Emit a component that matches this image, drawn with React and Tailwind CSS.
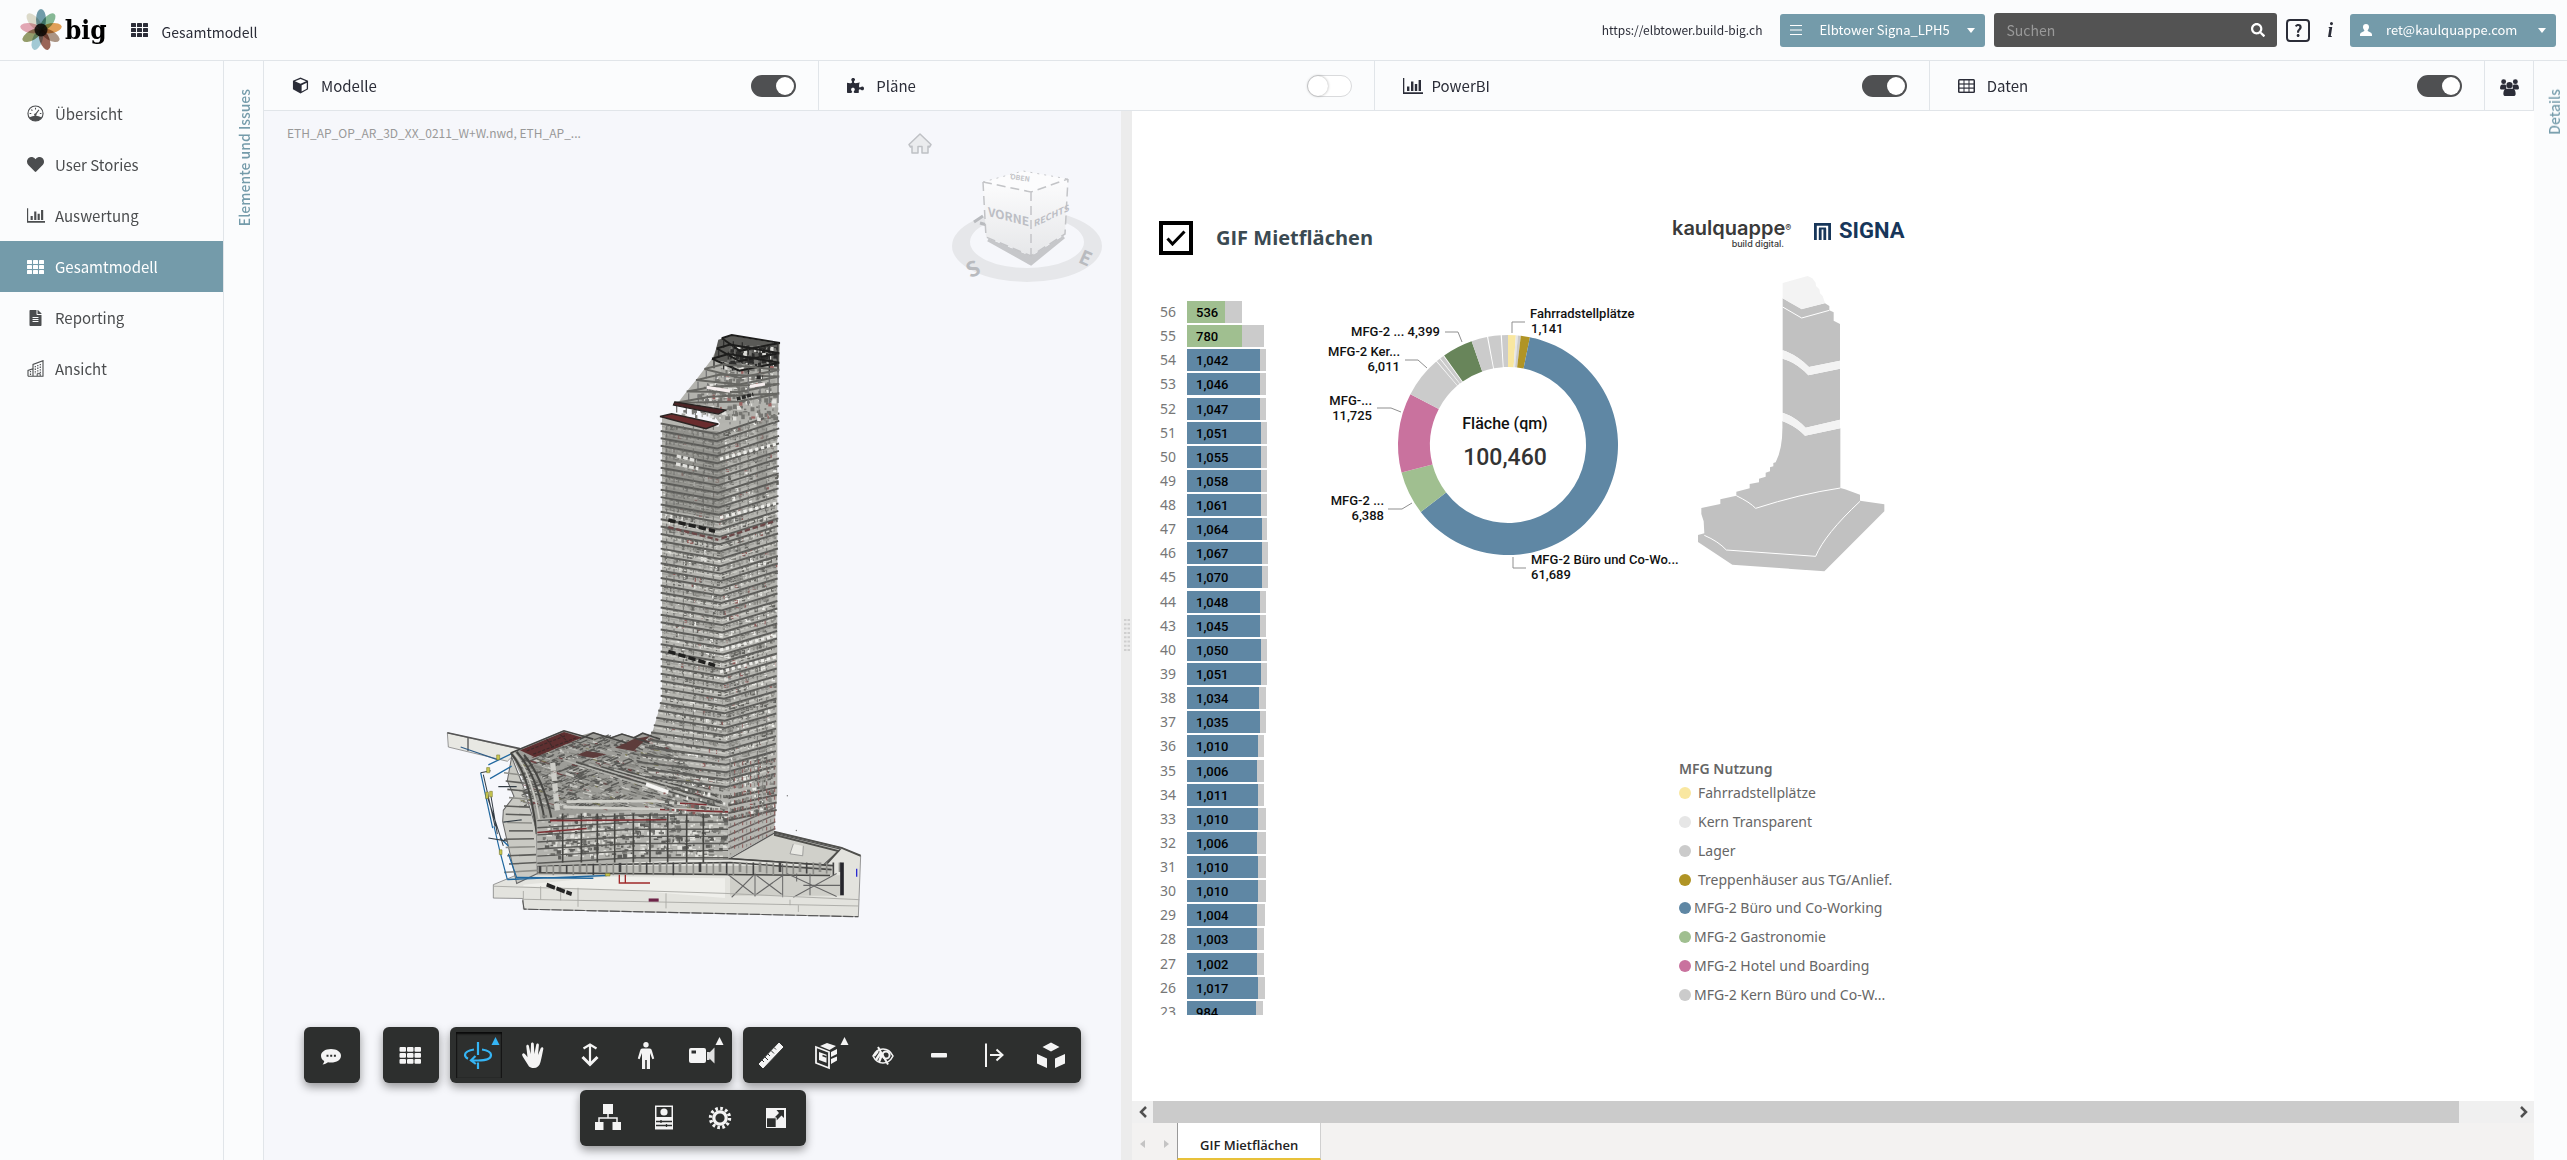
import React from "react";
import { FaHeart, FaFileAlt, FaSearch, FaPuzzlePiece } from "react-icons/fa";

/* ---------- small icons ---------- */

function GridIcon({ className }) {
  return (
    <svg viewBox="0 0 17 14" className={className} fill="currentColor" aria-hidden="true">
      {[0, 5, 10].map((y) =>
        [0, 6, 12].map((x) => <rect key={x + "-" + y} x={x} y={y} width="5" height="4" rx="0.6" />)
      )}
    </svg>
  );
}

function GaugeIcon({ className }) {
  return (
    <svg viewBox="0 0 18 18" className={className} aria-hidden="true">
      <circle cx="9" cy="9" r="8" fill="none" stroke="currentColor" strokeWidth="1.2" />
      <path d="M2.2 13.2Q9 9.6 15.8 13.2A8 8 0 0 1 2.2 13.2Z" fill="currentColor" />
      <path d="M8.6 10.5L12.6 5.2M9 3v1.8M4.6 4.8l1.1 1.2M2.8 9h1.7M13.6 9h1.6" stroke="currentColor" strokeWidth="1.1" fill="none" />
      <circle cx="8.8" cy="10.3" r="1.3" fill="currentColor" />
    </svg>
  );
}

function ChartIcon({ className }) {
  return (
    <svg viewBox="0 0 20 16" className={className} fill="currentColor" aria-hidden="true">
      <path d="M0 0h1.3v14.2H20V16H0z" />
      <path d="M4 8.5h2.4V13H4zM8 3.5h2.4V13H8zM11.8 6h2.4v7h-2.4zM15.6 2H18v11h-2.4z" />
    </svg>
  );
}

function BuildingIcon({ className }) {
  return (
    <svg viewBox="0 0 17 17" className={className} fill="none" stroke="currentColor" aria-hidden="true">
      <path d="M1 16.3V10.5l5-1.8v7.600M6 16V4.500l10-3.800v15.600M1 16.300h15.500" strokeWidth="1.1" />
      <path d="M8.300 6v8M10.800 5v8M13.300 4v9.500M3.500 11v4" strokeWidth="1.200" strokeDasharray="1.300 1.300" />
      <path d="M10.200 16v-2.300h3V16" strokeWidth="1" />
    </svg>
  );
}

function CubeIcon({ className }) {
  return (
    <svg viewBox="0 0 18 18" className={className} aria-hidden="true">
      <path d="M9 .5l8 3.600v9L9 17.500 1 13.100v-9z" fill="currentColor" />
      <path d="M9 2.100l5.900 2.500L9 7.200 3.100 4.600z" fill="#fff" />
      <path d="M10.200 8.700l5.400-2.500v6.200l-5.400 3z" fill="#fff" />
    </svg>
  );
}

function TableIcon({ className }) {
  return (
    <svg viewBox="0 0 17 14" className={className} aria-hidden="true">
      <rect width="17" height="14" rx="1.500" fill="currentColor" />
      {[1.500, 5.600, 9.700].map((y) =>
        [1.500, 6.500, 11.500].map((x) => <rect key={x + "-" + y} x={x} y={y} width="4" height="2.900" fill="#fff" />)
      )}
    </svg>
  );
}

function GroupIcon({ className }) {
  return (
    <svg viewBox="0 0 20 18" className={className} fill="currentColor" aria-hidden="true">
      <circle cx="3.800" cy="2.800" r="2.600" />
      <circle cx="16.200" cy="2.800" r="2.600" />
      <path d="M2.500 5.800h3l1.200 1.500-.2 3-.9.900H1.500C.5 11.200 0 10.600 0 9.600 0 7.500.8 5.800 2.500 5.800zM17.500 5.800h-3l-1.200 1.500.2 3 .9.900h4.100c1 0 1.500-.6 1.500-1.600 0-2.100-.8-3.800-2.500-3.800z" />
      <circle cx="10" cy="6.500" r="3.300" />
      <path d="M6.800 10.200h6.400c2.200 0 3.300 2.200 3.300 5.300 0 1.600-.8 2.500-2.300 2.500H5.800c-1.500 0-2.300-.9-2.300-2.500 0-3.100 1.100-5.300 3.300-5.300z" />
    </svg>
  );
}

function PersonIcon({ className }) {
  return (
    <svg viewBox="0 0 12 12" className={className} fill="currentColor" aria-hidden="true">
      <path d="M6 0c1.900 0 3 1.300 3 3 0 1.400-.6 2.500-1.300 3.200v.9L10.500 8.400c.9.400 1.500 1.200 1.500 2.300V12H0v-1.300c0-1.100.6-1.900 1.500-2.300l2.800-1.300v-.9C3.600 5.500 3 4.400 3 3c0-1.700 1.100-3 3-3z" />
    </svg>
  );
}

function Caret() {
  return (
    <svg viewBox="0 0 8 5" className="h-[5px] w-2 shrink-0" fill="#fff" aria-hidden="true">
      <path d="M0 0h8L4 5z" />
    </svg>
  );
}

function Flower() {
  const petals = [
    ["#4f8496", 0], ["#6aa97c", 40], ["#dd8a2e", 80], ["#9a7d67", 120], ["#84402f", 160],
    ["#8fc0cc", 200], ["#7c8646", 240], ["#e093a4", 280], ["#d9d5c0", 320],
  ];
  return (
    <svg viewBox="0 0 42 42" className="size-[42px]" aria-hidden="true">
      {petals.map(([c, a]) => (
        <ellipse key={a} cx="21" cy="10.500" rx="5" ry="10.500" fill={c} opacity="0.8"
          transform={`rotate(${a} 21 21)`} className="mix-blend-multiply" />
      ))}
      <circle cx="21" cy="21" r="6.500" fill="#0b0703" opacity="0.85" />
    </svg>
  );
}

/* ---------- header ---------- */

function Header() {
  return (
    <header className="flex h-[61px] shrink-0 items-center border-b border-[#e1e5e9] bg-[#fbfcfd] pr-[11px] pl-5">
      <a href="#" className="flex items-center text-black" aria-label="big">
        <Flower />
        <span className="ml-[3px] font-['DejaVu_Serif_Condensed','DejaVu_Serif',serif] text-[26px] leading-8 font-bold">big</span>
      </a>
      <GridIcon className="ml-6 h-[14px] w-[17px]" />
      <h1 className="ml-3.5 pt-1 text-[14px] leading-6">Gesamtmodell</h1>
      <div className="ml-auto flex items-center">
        <a href="#" className="mr-[18px] text-[12px] leading-6">https://elbtower.build-big.ch</a>
        <label className="mr-[9px] flex h-[33px] w-[205px] items-center rounded-[3px] bg-[#749baa] px-[10px] text-white">
          <svg viewBox="0 0 12 10" className="h-[10px] w-3 shrink-0" stroke="#fff" aria-hidden="true">
            <path d="M0 .5h12M0 5h12M0 9.500h12" />
          </svg>
          <select aria-label="Projekt" className="ml-[17px] min-w-0 flex-1 appearance-none bg-transparent text-[13px] leading-6 outline-none">
            <option>Elbtower Signa_LPH5</option>
          </select>
          <Caret />
        </label>
        <form className="mr-[9px] flex h-[34px] w-[283px] items-center rounded-[3px] bg-[#535353] px-3">
          <input aria-label="Suchen" placeholder="Suchen" className="min-w-0 flex-1 bg-transparent text-[14px] leading-6 text-white outline-none placeholder:text-[#999]" />
          <button type="button" aria-label="Suche starten" className="text-white">
            <FaSearch className="size-[14px]" />
          </button>
        </form>
        <button type="button" className="mr-[17px] flex h-[23px] w-6 items-center justify-center rounded-[4px] border-2 border-[#2b2d38] text-base leading-5 font-bold">?</button>
        <button type="button" className="mr-[17px] font-['Liberation_Serif',serif] text-xl leading-6 font-bold italic">i</button>
        <button type="button" aria-haspopup="menu" className="flex h-[33px] w-[206px] items-center rounded-[3px] bg-[#749baa] px-[10px] text-white">
          <PersonIcon className="size-3" />
          <span className="mr-auto ml-3.5 text-[13px] leading-6">ret@kaulquappe.com</span>
          <Caret />
        </button>
      </div>
    </header>
  );
}

/* ---------- sidebar ---------- */

const NAV = [
  ["Übersicht", GaugeIcon, "size-[17px]"],
  ["User Stories", FaHeart, "size-[17px]"],
  ["Auswertung", ChartIcon, "h-[15px] w-[18px]"],
  ["Gesamtmodell", GridIcon, "h-[14px] w-[17px]"],
  ["Reporting", FaFileAlt, "h-4 w-[17px]"],
  ["Ansicht", BuildingIcon, "size-[17px]"],
];

function Sidebar() {
  return (
    <nav className="w-56 shrink-0 border-r border-[#e1e5e9] bg-[#fbfcfd] pt-[27px] text-[#4b4d4f]">
      {NAV.map(([label, Icon, size]) => (
        <a key={label} href="#"
          className={"flex h-[51px] items-center pl-[27px] text-[15px] leading-6 " + (label === "Gesamtmodell" ? "bg-[#749baa] text-white" : "")}>
          <span className="flex w-7"><Icon className={size} /></span>
          {label}
        </a>
      ))}
    </nav>
  );
}

/* ---------- tab bar ---------- */

const PANELS = [
  ["Modelle", CubeIcon, "size-[17px]", true],
  ["Pläne", FaPuzzlePiece, "size-[17px]", false],
  ["PowerBI", ChartIcon, "h-4 w-5", true],
  ["Daten", TableIcon, "h-[14px] w-[17px]", true],
];

function PanelBar() {
  return (
    <div className="flex h-[50px] shrink-0 border-b border-[#e1e5e9] bg-[#fbfcfd]">
      {PANELS.map(([label, Icon, size, on]) => (
        <label key={label} className="flex flex-1 items-center border-r border-[#e1e5e9] pr-[22px] pl-7 text-[15px] leading-6">
          <span className="flex w-[29px]"><Icon className={size} /></span>
          {label}
          <input type="checkbox" role="switch" defaultChecked={on}
            className="ml-auto h-[22px] w-[45px] appearance-none rounded-full border border-[#d9dadc] bg-white before:block before:size-5 before:rounded-full before:bg-white before:shadow-[0_0_3px_rgba(0,0,0,0.35)] checked:border-2 checked:border-[#4f5052] checked:bg-[#4f5052] checked:before:ml-[23px] checked:before:size-[18px] checked:before:shadow-none" />
        </label>
      ))}
      <button type="button" aria-label="Benutzer" className="flex w-[49px] items-center justify-center border-r border-[#e1e5e9] pt-1">
        <GroupIcon className="h-[17px] w-[19px]" />
      </button>
    </div>
  );
}

function SideTab({ label, className }) {
  return (
    <aside className={"shrink-0 bg-[#fbfcfd] pt-7 " + className}>
      <button type="button" className="rotate-180 text-[14px] leading-6 font-medium text-[#749baa] [writing-mode:vertical-rl]">{label}</button>
    </aside>
  );
}

/* ---------- 3D model ---------- */

function makeRandom(seed) {
  let s = seed;
  return () => {
    s = (s * 16807) % 2147483647;
    return s / 2147483647;
  };
}

function TowerModel() {
  const rnd = makeRandom(77);
  const floors = [];
  for (let i = 0; i < 53; i++) {
    const t = i / 52;
    const y = 262 + i * 18.600;
    const flare = y > 950 ? Math.pow((y - 950) / 280, 1.500) * 150 : 0;
    floors.push({ y, left: 722 - flare * (y < 1120 ? 1 : 0.500), cx: 890 + t * 32, cy: y + 26, ry: y - 26 + t * 20, right: 1078 - t * 12 });
  }
  const specks = [];
  for (let i = 0; i < 2600; i++) {
    const f = floors[Math.floor(rnd() * floors.length)];
    const leftSide = rnd() < 0.450;
    const u = rnd();
    const x = leftSide ? 730 + u * (f.cx - 735) : f.cx + u * (f.right - f.cx - 8);
    const y = leftSide ? f.y + u * 26 : f.cy + u * (f.ry - f.cy);
    const k = rnd();
    const fill = k < 0.420 ? "#63635f" : k < 0.560 ? "#eeeeea" : k < 0.940 ? "#8b8b86" : "#8d5c5a";
    specks.push(<rect key={i} x={x} y={y + 3} width={2 + rnd() * 9} height={3 + rnd() * 8} fill={fill} />);
  }
  const crown = [];
  for (let i = 0; i < 520; i++) {
    const y = 62 + rnd() * 185;
    const start = 928 - Math.max(0, y - 95) * 1.050;
    const x = Math.max(start, 775) + rnd() * (1062 - Math.max(start, 775));
    const k = rnd();
    const dark = y < 112;
    const fill = dark ? (k < 0.650 ? "#2c2c2b" : k < 0.850 ? "#777774" : "#dcdcd8") : k < 0.450 ? "#757571" : k < 0.750 ? "#a7a7a2" : k < 0.950 ? "#e2e2de" : "#9b6462";
    crown.push(<rect key={i} x={x} y={y} width={3 + rnd() * 12} height={3 + rnd() * 9} fill={fill} />);
  }
  const clutter = [];
  for (let i = 0; i < 1500; i++) {
    const x = 300 + rnd() * 620;
    const top = x < 430 ? 1100 - (x - 300) * 0.300 : 1058;
    const y = top + rnd() * (1235 - top);
    const len = 5 + rnd() * 24;
    const k = rnd();
    clutter.push(<path key={i} d={`M${x} ${y}l${len} ${len * (x < 620 && k < 0.400 ? -0.350 : 0.250)}`}
      stroke={k < 0.500 ? "#595956" : k < 0.780 ? "#878782" : k < 0.920 ? "#c9c9c4" : k < 0.970 ? "#6e3f40" : "#7e7c58"} strokeWidth={1.500 + rnd() * 3} />);
  }
  const facade = [];
  for (let i = 0; i < 620; i++) {
    facade.push(<rect key={i} x={365 + rnd() * 550} y={1245 + rnd() * 110} width={3 + rnd() * 14} height={3 + rnd() * 7}
      fill={["#e2e2dd", "#5c5c59", "#777773", "#c5c5c0"][Math.floor(rnd() * 4)]} />);
  }
  const cap = [
    [905, 46, 935, 38, 1080, 58], [890, 72, 930, 62, 1078, 84], [876, 98, 925, 86, 1078, 108], [853, 124, 910, 112, 1078, 126],
    [828, 152, 900, 138, 1078, 143], [800, 181, 885, 168, 1078, 162], [764, 210, 870, 194, 1078, 186],
  ];
  return (
    <svg viewBox="0 0 1380 1568" preserveAspectRatio="none" className="h-[620px] w-[460px]" fill="none" role="img" aria-label="3D-Modell Elbtower">
      {/* base slabs */}
      <path d="M220 1428L300 1400 345 1360H925L1062 1294 1265 1335 1322 1355 1315 1509 312 1490 308 1463 220 1462Z" fill="#e3e3de" stroke="#777" strokeWidth="2" />
      <path d="M930 1362L1062 1298 1262 1338 1210 1378Z" fill="#d0d0ca" stroke="#555" strokeWidth="3" />
      <path d="M1062 1294L1265 1335 1322 1355M1062 1302L1255 1343 1215 1380" stroke="#50504d" strokeWidth="5" />
      <path d="M1120 1325L1110 1350 1148 1355 1150 1330" fill="#e9e9e4" stroke="#888" strokeWidth="2" />
      <path d="M350 1380H1235V1404H350Z" fill="#bdbdb7" />
      <path d="M930 1404H1262V1456H930Z" fill="#cfcfc9" />
      <path d="M350 1368L925 1362 1240 1380M350 1380L930 1372 1235 1390M355 1398L1230 1405" stroke="#474745" strokeWidth="4" />
      {Array.from({ length: 46 }, (_, i) => (
        <path key={i} d={`M${360 + i * 20} 1372V${1396 + (i % 3) * 4}`} stroke={i % 4 ? "#8a8a86" : "#444"} strokeWidth={i % 3 ? 5 : 8} />
      ))}
      <path d="M310 1428L560 1408 915 1412V1462L600 1440 310 1432Z" fill="#efefeb" />
      <path d="M920 1400L1005 1455 1088 1405V1460M1005 1400V1458M1088 1375V1460M935 1460L1000 1405M1010 1405L1085 1452M1120 1460L1250 1400M1100 1400L1250 1458M1130 1400V1420M1170 1400V1455M1150 1430H1260" stroke="#666" strokeWidth="3" />
      <path d="M1266 1372V1455" stroke="#26262c" strokeWidth="11" />
      <path d="M1310 1388V1408" stroke="#2b2bd0" strokeWidth="4" />
      <path d="M220 1432L912 1450 1318 1466M310 1465L1315 1482M310 1444V1490M362 1432V1466M422 1434V1468M474 1436V1484M738 1450V1488M1110 1466V1480M1135 1480V1497" stroke="#a9a9a5" strokeWidth="2.500" />
      <path d="M308 1468L312 1490 1315 1509" stroke="#555" strokeWidth="3" strokeDasharray="30 5" />
      <path d="M380 1428L455 1452" stroke="#252525" strokeWidth="10" strokeDasharray="26 5" />
      <path d="M600 1424H690M598 1403V1426M616 1403V1426" stroke="#a02a2a" strokeWidth="4" />
      <path d="M686 1467H716" stroke="#6e2448" strokeWidth="8" />

      {/* bridge */}
      <path d="M82 1044L270 1080 300 1085 262 1116 85 1080Z" fill="#e8e8e3" stroke="#777" strokeWidth="2" />
      <path d="M82 1044L300 1084M144 1056V1090" stroke="#555" strokeWidth="4" />
      <path d="M122 1080L232 1112" stroke="#2d5b86" strokeWidth="3" />

      {/* west terraces */}
      <path d="M275 1105L262 1165 282 1205 250 1240 248 1268 262 1320 290 1425 352 1400 350 1290 310 1180Z" fill="#c9c9c3" stroke="#666" strokeWidth="3" />
      {Array.from({ length: 13 }, (_, i) => (
        <path key={i} d={`M${252 + (i % 4) * 5} ${1145 + i * 21}L${318 + i * 3} ${1152 + i * 20}`} stroke={i % 3 ? "#5c5c59" : "#8f8f8a"} strokeWidth="4" />
      ))}
      <path d="M272 1098L205 1125M182 1145L218 1285M262 1415L560 1405M240 1310L265 1330M210 1160L275 1128M222 1280L240 1345M240 1345L262 1415M265 1350L290 1410 520 1412" stroke="#1f679f" strokeWidth="3.500" />
      <path d="M182 1145L212 1140M190 1150L225 1280M205 1310L262 1318M200 1200L250 1330M235 1180H290M250 1270L305 1264M212 1200L232 1300" stroke="#333c44" strokeWidth="3" />
      <path d="M200 1132h9v13h-9zM197 1194h8v16h-8zM209 1192h8v14h-8zM230 1100h9v12h-9zM238 1340h8v12h-8zM556 1400h14v6h-14z" fill="#c9c84f" stroke="#77752d" strokeWidth="1.500" />

      {/* podium */}
      <path d="M272 1095L430 1038 478 1052 520 1042 570 1056 605 1046 640 1054 668 1044 690 1050 726 1000 925 1200V1362L350 1380 350 1298 318 1180Z" fill="#9d9d98" />
      {clutter}
      <path d="M300 1088L432 1042 486 1056 345 1106Z" fill="#5e2f30" />
      <path d="M320 1090L440 1050M340 1098L470 1056M380 1060L400 1082M420 1048L445 1068" stroke="#3e2a2a" strokeWidth="3" strokeDasharray="9 5" />
      <path d="M585 1082L640 1060 690 1052 640 1090ZM470 1100L500 1090 560 1098 520 1108Z" fill="#5d3c3b" />
      <path d="M272 1095L432 1039 520 1060M480 1060L520 1044 620 1070M570 1058L606 1047 690 1070M640 1058L668 1045 720 1060" stroke="#454543" strokeWidth="4" />
      <path d="M272 1095Q330 1150 350 1300M290 1092Q352 1150 375 1270M312 1100Q370 1160 395 1262" stroke="#464643" strokeWidth="6" />
      <path d="M282 1095Q340 1150 362 1285" stroke="#c9c9c3" strokeWidth="5" />
      <path d="M398 1120L412 1240" stroke="#cdcdc8" strokeWidth="16" strokeDasharray="20 6" />
      {Array.from({ length: 8 }, (_, i) => (
        <path key={i} d={`M${430 + i * 38} ${1112 + i * 6}L${900} ${1240 - i * 7}`} stroke={i % 2 ? "#51514e" : "#b3b3ae"} strokeWidth="4" />
      ))}
      <path d="M678 1174L745 1194" stroke="#f6f6f4" strokeWidth="10" />
      <path d="M440 1218L700 1216 900 1235M430 1232L900 1240" stroke="#cfcfc9" strokeWidth="7" />
      <path d="M350 1262L640 1240 925 1240V1362L350 1380Z" fill="#b3b3ae" />
      {facade}
      {[1252, 1270, 1288, 1306, 1324, 1342, 1360].map((y) => (
        <path key={y} d={`M352 ${y + 14}L640 ${y}L925 ${y}`} stroke="#5a5a57" strokeWidth="3.500" />
      ))}
      {[428, 484, 532, 584, 640, 690, 743, 800, 850].map((x) => (
        <path key={x} d={`M${x} 1248V1372`} stroke="#464643" strokeWidth="5" />
      ))}
      <path d="M352 1296L500 1286M390 1266L740 1264M720 1238L925 1244M780 1222L860 1226" stroke="#7d2f33" strokeWidth="4" />

      {/* tower body */}
      <path d="M726 248L895 270 920 225 935 60 1072 70V1195L1062 1294 925 1362V1235L700 1035 726 960Z" fill="#b5b5b0" />
      {specks}
      <path d="M735 270L895 282 915 290V490L870 500 735 480Z" fill="#7b7b77" opacity="0.600" />
      <path d="M1010 200H1038V440H1010Z" fill="#8a8a86" opacity="0.600" />
      {floors.filter((f) => f.y < 1170).map((f, i) => (
        <g key={i}>
          <path d={`M${f.left} ${f.y}L${f.cx} ${f.cy}L${f.right} ${f.ry}`} stroke="#5c5c59" strokeWidth="5" />
          <path d={`M${f.left + 4} ${f.y + 7}L${f.cx} ${f.cy + 8}L${f.right - 6} ${f.ry + 7}`} stroke={i > 11 && i % 2 ? "#cfcfc9" : "#a1a19c"} strokeWidth="3.500" strokeDasharray={i % 3 ? "22 4" : "10 6"} />
        </g>
      ))}
      {floors.filter((f) => f.y >= 1170).map((f, i) => (
        <path key={i} d={`M925 ${f.cy + 10}L${1070} ${f.ry + 16}`} stroke="#5c5956" strokeWidth="5" />
      ))}
      {[1295, 1313, 1331, 1348].map((y) => (
        <path key={y} d={`M925 ${y - 10}L1066 ${y - 62}`} stroke="#6a6462" strokeWidth="4" />
      ))}
      {Array.from({ length: 12 }, (_, i) => (
        <path key={i} d={`M${932 + i * 12} ${1120 - i}V${1352 - i * 5}`} stroke={i % 2 ? "#8a5a58" : "#8b8b86"} strokeWidth="3" strokeDasharray="9 10" />
      ))}
      {[740, 762, 790, 820, 850, 880, 930, 960, 985, 1012, 1040, 1062].map((x) => (
        <path key={x} d={`M${x} ${x > 900 ? 235 : 268}V${x > 900 ? 1180 : 1080}`} stroke="#6d6d69" strokeWidth="2.500" strokeDasharray="10 9" />
      ))}
      <path d="M900 352L1075 312M900 500L1075 462M900 835L1070 798M900 890L1070 852" stroke="#ecece8" strokeWidth="8" strokeDasharray="10 8" />
      <path d="M745 506L885 534M745 838L885 874" stroke="#20201f" strokeWidth="9" strokeDasharray="22 9" />
      <path d="M745 524L895 556M905 552L1060 510" stroke="#6b4747" strokeWidth="6" strokeDasharray="16 8" />
      <path d="M770 344L830 356M768 364L835 376" stroke="#e2e2de" strokeWidth="8" strokeDasharray="14 6" />

      {/* stepped crown */}
      <path d="M905 46L935 38 1080 58 1074 240 900 262 880 240 770 214 800 181 828 152 853 124 876 98 890 72Z" fill="#b3b3ae" />
      <path d="M895 50L935 40 1074 60V118L935 110 880 100Z" fill="#5a5a57" />
      {crown}
      {cap.map(([ax, ay, bx, by, cx, cy], i) => (
        <g key={i}>
          <path d={`M${ax} ${ay}L${bx} ${by}L${cx} ${cy}M${ax} ${ay}L${cx - 120} ${cy + 20}L${cx} ${cy}`} stroke={i < 3 ? "#1d1d1c" : "#666662"} strokeWidth="5" />
          <path d={`M${ax + 6} ${ay + 4}V${ay + 24}M${ax + 35} ${ay + 8}V${ay + 27}M${ax + 62} ${ay + 10}V${ay + 30}M985 ${cy + 12}V${cy + 30}M1020 ${cy + 8}V${cy + 26}M1048 ${cy + 6}V${cy + 26}M1074 ${cy}V${cy + 24}`} stroke={i < 3 ? "#30302f" : "#777"} strokeWidth="4" />
        </g>
      ))}
      <path d="M860 170L930 180M990 168L1035 162" stroke="#f5eeee" strokeWidth="8" />
      <path d="M950 200L1000 188M1010 145H1028" stroke="#2a2a29" strokeWidth="9" strokeDasharray="12 4" />
      <path d="M764 207L918 228 895 238 760 215Z" fill="#4b2426" stroke="#262221" strokeWidth="3" />
      <path d="M720 244L755 237 895 263 858 275Z" fill="#6a2c2e" stroke="#2c2423" strokeWidth="4" />
      <circle cx="1102" cy="1203" r="2" fill="#777" />
      <circle cx="1129" cy="1291" r="2" fill="#777" />
    </svg>
  );
}

function ViewCube() {
  return (
    <svg viewBox="0 0 152 122" className="h-[122px] w-[152px]" fill="none" role="img" aria-label="Ansichtswürfel">
      <defs>
        <linearGradient id="face" x1="0" y1="0" x2="0" y2="1">
          <stop offset="0" stopColor="#fcfcfd" />
          <stop offset="1" stopColor="#e6e7e9" />
        </linearGradient>
      </defs>
      <path fillRule="evenodd" fill="#e6e7ea" d="M0 82a75 36 0 1 0 150 0a75 36 0 1 0 -150 0ZM18 78a57 26 0 1 0 114 0a57 26 0 1 0 -114 0Z" />
      <text x="14" y="112" fontSize="21" fontWeight="700" fill="#b9bbbf" transform="rotate(-24 22 104)">S</text>
      <text x="128" y="102" fontSize="19" fontWeight="700" fill="#b9bbbf" transform="rotate(24 136 94)">E</text>
      <path d="M22 58l9-6M28 59l7 2" stroke="#b9bbbf" strokeWidth="3" />
      <path d="M36 76L79 94 112 73 79 100Z" fill="#c6c7ca" stroke="#c6c7ca" strokeWidth="3" />
      <path d="M31 18L79 28V92L34 73Z" fill="url(#face)" />
      <path d="M79 28L116 15 113 70 79 92Z" fill="url(#face)" />
      <path d="M31 18L71 7 116 15 79 28Z" fill="#fcfcfd" />
      <path d="M31 18L79 28 116 15M79 28V92M31 18L34 73 79 92 113 70 116 15" stroke="#c3c4c7" strokeWidth="1.500" strokeDasharray="9 5" />
      <path d="M31 18L71 7 116 15" stroke="#c8c9cc" strokeWidth="1" strokeDasharray="2 5" />
      <text x="0" y="0" fontSize="12" fontWeight="700" fill="#bcbec4" transform="translate(36 52) skewY(14)">VORNE</text>
      <text x="0" y="0" fontSize="9" fontWeight="700" fill="#bcbec4" transform="translate(82 63) skewY(-25)">RECHTS</text>
      <text x="58" y="15" fontSize="7" fontWeight="700" fill="#c3c4c8" transform="rotate(8 58 15)">OBEN</text>
    </svg>
  );
}

/* ---------- viewer toolbar ---------- */

const W = "#f4f4f4";
const TOOL_GROUPS = [
  [
    ["Kommentar", <path key="p" d="M14 8c5.800 0 10 2.800 10 6.800s-4.200 6.800-10 6.800c-1 0-2-.1-3-.3-1.500 1.300-3.500 2-5.500 2.200 1-1 1.600-2.200 1.700-3.500C5 18.700 4 16.900 4 14.800 4 10.800 8.200 8 14 8zM9.500 13.800v2h2v-2zm3.700 0v2h2v-2zm3.700 0v2h2v-2z" fill={W} fillRule="evenodd" />],
  ],
  [
    ["Kacheln", <g key="p" fill={W}>{[6, 12, 18].map((y) => [3.500, 11, 18.500].map((x) => <rect key={x + y * 30} x={x} y={y} width="6.500" height="4.800" rx="1" />))}</g>],
  ],
  [
    ["Orbit", <g key="p" stroke="#35b5f5" strokeWidth="2.200" fill="none"><path d="M14 1v13M14 21.500V28M10 8.500C4 9.500 1 11.500 1 14c0 1.600 1.200 2.800 3 3.700M18 8.500c5.500.9 9 2.700 9 5.500 0 4-6.500 5.500-13 5.500H7.500M11.500 15l-4.500 4.300 4.800 3.700" /></g>, "#35b5f5"],
    ["Verschieben", <path key="p" d="M9 25.500L3 16c-1-1.800-1.300-3.200 0-3.600 1.300-.3 2.500 1.200 4.500 3.900L6.300 5.500c-.2-2 2.200-2.300 2.600-.4l1.700 8L11 3c0-2 2.700-2 2.800 0l.6 10 1.800-9.300c.4-1.900 2.900-1.500 2.700.4l-.9 10 2.800-7c.7-1.700 2.900-1 2.500.8-1 5-1.800 9-2.800 13-1 4-3.500 6.100-6.700 6.100-2.400 0-3.800-.6-4.800-1.500z" fill={W} />],
    ["Zoom", <g key="p" stroke={W} strokeWidth="3" fill="none"><path d="M14 3v19M7.500 7.500L14 3.500l6.500 4" strokeWidth="2.200" /><path d="M6.500 16l7.500 7.500 7.500-7.500" /></g>],
    ["Erste Person", <g key="p" fill={W}><circle cx="14" cy="3.800" r="2.700" /><path d="M10.500 7.500h7c1.500 0 2 .8 2.500 2.500l2.200 7.500-1.800.8L18 12v16h-3.200v-9h-1.600v9H10V12l-2.400 6.300-1.800-.8L8 10c.5-1.700 1-2.500 2.500-2.500z" /></g>],
    ["Kamera", <g key="p" fill={W}><path d="M3 7h13a2 2 0 0 1 2 2v11a2 2 0 0 1-2 2H3a2 2 0 0 1-2-2V9a2 2 0 0 1 2-2zm.5 2.500v3h4.500v-3z" fillRule="evenodd" /><path d="M19 11h2.500v8H19zM21.500 11.500l5-5v16l-5-5z" opacity="0.9" /></g>, W],
  ],
  [
    ["Messen", <path key="p" d="M1 23L22 1l5 5L6 28zM5 19l2 2M8 16l3 3M11 13l2 2M14 9.500l3 3M17 6.500l2 2" fill={W} stroke="#2d2f2e" strokeWidth="1" />],
    ["Schnitt", <g key="p"><path d="M3 6l13 5v16L3 22z" fill="none" stroke={W} strokeWidth="1.800" /><path d="M6 11l7.500 2.800v8L6 19z" fill={W} /><path d="M9.500 14.500l4 1.500" stroke="#2d2f2e" strokeWidth="1.500" /><path d="M7 5l7-3 9 3-6.500 4zM18 11l6-3v5l-6 3zM18 18l6-2.500v4L18 23z" fill={W} /></g>, W],
    ["Ausblenden", <g key="p" stroke={W} fill="none"><path d="M4 15c2.500-5 6-7 10-7s7.500 2 10 7c-2.500 5-6 7-10 7S6.500 20 4 15z" strokeWidth="1.600" /><path d="M7 19l5-8M10 21l3.500-9M5 15l4-5" strokeWidth="2.400" /><circle cx="17" cy="14" r="3.600" strokeWidth="2" /><path d="M9 6l10 17.500" strokeWidth="2" /></g>],
    ["Ebene", <rect key="p" x="6" y="12" width="16" height="4.500" rx="1" fill={W} />],
    ["Teilen", <g key="p" stroke={W} strokeWidth="2" fill="none"><path d="M5 2.500v23.500M9 14h12M15.500 8.500l6 5.500-6 5.500" /></g>],
    ["Explodieren", <path key="p" d="M14 1.500l8.500 4.500-8.500 4.500L5.500 6zM0 13l10 4.500V27L0 22.500zM28 13l-10 4.500V27l10-4.500z" fill={W} />],
  ],
  [
    ["Modellbrowser", <g key="p" fill={W}><path d="M9 0h10v10H9zM1 18h8.500v8H1zM18.500 18H27v8h-8.500z" /><path d="M14 10v4M5 18v-4h18v4" stroke={W} strokeWidth="1.500" fill="none" /></g>],
    ["Eigenschaften", <g key="p"><path d="M5 1.500h18v24H5z" fill={W} /><path d="M6.500 3h15v10h-15z" fill="#2d2f2e" /><circle cx="14" cy="8" r="3.600" fill={W} /><path d="M6 17.500h16M6 21.500h16M11 16v3M16.500 20v3" stroke="#2d2f2e" strokeWidth="1.300" /></g>],
    ["Einstellungen", <g key="p"><circle cx="14" cy="14" r="6.200" fill="none" stroke={W} strokeWidth="3.200" /><circle cx="14" cy="14" r="9.500" fill="none" stroke={W} strokeWidth="3.400" strokeDasharray="2.600 2.370" /></g>],
    ["Vollbild", <g key="p"><path d="M4 4h20v20H4z" fill={W} /><path d="M5 14h9v9H5zM14.500 6H22v8l-2.500-2.500-5 5-2.500-2.500 5-5z" fill="#2d2f2e" /><path d="M5 13.800h9.200V23" stroke={W} fill="none" /></g>],
  ],
];

function ToolGroup({ tools, active }) {
  return (
    <div className={"flex rounded-md bg-[#2d2f2e] shadow-[0_4px_10px_rgba(0,0,0,0.4)] " + (tools.length > 1 ? "px-px" : "")}>
      {tools.map(([label, icon, flyout]) => (
        <button key={label} type="button" aria-label={label} className="flex size-14 items-center justify-center">
          <svg viewBox="0 0 46 46" className={"size-[46px] " + (label === active ? "shadow-[inset_0_2px_2px_#0a0a0a,inset_1px_0_1px_#1a1a1a,inset_-1px_0_1px_#1a1a1a]" : "")} aria-hidden="true">
            <g transform="translate(8 9)">{icon}</g>
            {flyout && <path d="M39.500 5l4 8h-8z" fill={flyout} />}
          </svg>
        </button>
      ))}
    </div>
  );
}

function ModelViewer() {
  return (
    <section className="flex min-w-0 flex-[857_1_0%] flex-col bg-[#f6f7fb]">
      <div className="flex items-start pt-[10px] pr-[17px] pl-[23px]">
        <p className="text-[12px] leading-6 text-[#999]">ETH_AP_OP_AR_3D_XX_0211_W+W.nwd, ETH_AP_...</p>
        <button type="button" aria-label="Startansicht" className="mt-3 mr-[20px] ml-auto">
          <svg viewBox="0 0 24 21" className="h-[21px] w-6" fill="#ebecee" stroke="#bfc1c5" strokeWidth="1.500" strokeLinejoin="round" aria-hidden="true">
            <path d="M12 1L1 11.500l1.500 2.500 1.500-.8V20h6v-6.500h4V20h6v-6.800l1.500.8L23 11.500z" />
          </svg>
        </button>
        <div className="mt-[43px]"><ViewCube /></div>
      </div>
      <div className="flex flex-1 justify-center pt-[34px] pr-[85px]"><TowerModel /></div>
      <div className="flex flex-col items-center gap-[7px] pb-[14px]">
        <div className="flex gap-[11px]">
          <div className="mr-3"><ToolGroup tools={TOOL_GROUPS[0]} /></div>
          <ToolGroup tools={TOOL_GROUPS[1]} />
          <ToolGroup tools={TOOL_GROUPS[2]} active="Orbit" />
          <ToolGroup tools={TOOL_GROUPS[3]} />
        </div>
        <ToolGroup tools={TOOL_GROUPS[4]} />
      </div>
    </section>
  );
}

/* ---------- report ---------- */

/* floor, label, total bar length */
const FLOORS = [
  [56, 536, 55], [55, 780, 77], [54, 1042, 79], [53, 1046, 79], [52, 1047, 79], [51, 1051, 80], [50, 1055, 80],
  [49, 1058, 80], [48, 1061, 80], [47, 1064, 80], [46, 1067, 81], [45, 1070, 81], [44, 1048, 79], [43, 1045, 79],
  [40, 1050, 80], [39, 1051, 80], [38, 1034, 79], [37, 1035, 79], [36, 1010, 77], [35, 1006, 77], [34, 1011, 77],
  [33, 1010, 79], [32, 1006, 79], [31, 1010, 79], [30, 1010, 79], [29, 1004, 78], [28, 1003, 77], [27, 1002, 77],
  [26, 1017, 78], [23, 984, 76],
];

function FloorBars() {
  return (
    <div className="h-[714px] shrink-0 overflow-hidden">
      <ul className="grid h-[724px] grid-rows-[repeat(30,minmax(0,1fr))]">
        {FLOORS.map(([floor, value, total]) => (
          <li key={floor} className="flex">
            <span className="w-[17px] text-right font-['Noto_Sans',sans-serif] text-[14px] leading-[22px] text-[#777]">{floor}</span>
            <div className="ml-[11px] h-[22px] bg-[#cbcbcb]" style={{ width: total }}>
              <div className={"h-full pl-[9px] font-['Roboto',sans-serif] text-[13px] leading-6 font-medium text-black " + (value < 800 ? "bg-[#a0bf90]" : "bg-[#5f87a4]")}
                style={{ width: Math.round(value / 14.270) }}>
                {value.toLocaleString("en-US")}
              </div>
            </div>
          </li>
        ))}
      </ul>
    </div>
  );
}

const SLICES = [
  [0, 4.100, "#f9e7a0"], [4.100, 5.200, "#e6e6e6"], [5.200, 6.700, "#cbcbcb"], [6.700, 11.500, "#b09425"],
  [11.500, 232.500, "#5f87a4"], [232.500, 255.500, "#a0bf90"], [255.500, 297.500, "#c9729e"], [297.500, 319.300, "#cbcbcb"],
  [319.700, 321.600, "#cbcbcb"], [322, 324, "#cbcbcb"], [324.500, 340.700, "#68855a"], [340.700, 349, "#cbcbcb"],
  [349.600, 356.200, "#cbcbcb"], [356.800, 360, "#cbcbcb"],
];

function arc(a, b) {
  const cx = 188, cy = 144, R = 110, r = 78;
  const p = (ang, rad) => {
    const t = ((ang - 90) * Math.PI) / 180;
    return `${(cx + rad * Math.cos(t)).toFixed(2)} ${(cy + rad * Math.sin(t)).toFixed(2)}`;
  };
  const big = b - a > 180 ? 1 : 0;
  return `M${p(a, R)}A${R} ${R} 0 ${big} 1 ${p(b, R)}L${p(b, r)}A${r} ${r} 0 ${big} 0 ${p(a, r)}Z`;
}

function Donut() {
  return (
    <svg viewBox="0 0 352 310" className="h-[310px] w-[352px] overflow-visible font-['Roboto',sans-serif] font-medium" fontSize="13" role="img" aria-label="Fläche nach MFG Nutzung">
      {SLICES.map(([a, b, c]) => <path key={a} d={arc(a, b)} fill={c} />)}
      <path d="M192 32V21h13M125 31h13l4 10M85 59h13l9 8M57 107h14l10 4M68 208h14l10-6M193 256v11h13" fill="none" stroke="#8f8f8f" />
      <g fill="#111">
        <text x="210" y="17">Fahrradstellplätze</text>
        <text x="211" y="32">1,141</text>
        <text x="120" y="35" textAnchor="end">MFG-2 ... 4,399</text>
        <text x="80" y="55" textAnchor="end">MFG-2 Ker...</text>
        <text x="80" y="70" textAnchor="end">6,011</text>
        <text x="52" y="104" textAnchor="end">MFG-...</text>
        <text x="52" y="119" textAnchor="end">11,725</text>
        <text x="64" y="204" textAnchor="end">MFG-2 ...</text>
        <text x="64" y="219" textAnchor="end">6,388</text>
        <text x="211" y="263">MFG-2 Büro und Co-Wo...</text>
        <text x="211" y="278">61,689</text>
        <text x="185" y="128" textAnchor="middle" fontSize="16">Fläche (qm)</text>
        <text x="185" y="164" textAnchor="middle" fontSize="23" fill="#333">100,460</text>
      </g>
    </svg>
  );
}

function Silhouette() {
  return (
    <svg viewBox="168 220 576 900" className="h-[300px] w-48" role="img" aria-label="Gebäudeansicht">
      <g fill="#c1c1c1">
        <path d="M428 293L485 325 555 308 568 316V329L581 335V360L600 370V480L507 499Q470 462 428 449Z" />
        <path d="M428 474Q470 486 505 524L600 504V657L497 681Q465 648 428 636Z" />
        <path d="M428 662Q465 675 495 705L601 683V862L615 866 660 882V900L733 911V932L553 1112 277 1092 174 1024V1003L193 998 191 962 184 940V922L241 910V896L289 885V873L329 863V850L357 845V834L377 828V816L390 812V800L400 797V787L407 785Q430 740 427 662Z" />
      </g>
      <g fill="#f3f3f3">
        <path d="M428 247L503 226 517 233 527 246 528 256 538 266 540 278 548 286 555 307 485 326 428 293Z" />
        <path d="M428 449Q470 462 507 499L600 480V504L505 524Q470 486 428 474Z" />
        <path d="M428 636Q465 648 497 681L600 657V683L495 705Q465 675 428 662Z" />
      </g>
      <path d="M428 319L485 352 568 329M289 885Q330 905 347 923Q480 880 601 862M193 1004Q235 1022 259 1048L527 1067Q555 1000 660 902" fill="none" stroke="#fff" strokeWidth="3" />
    </svg>
  );
}

const LEGEND = [
  ["Fahrradstellplätze", "bg-[#f9e7a0]", true],
  ["Kern Transparent", "bg-[#e6e6e6]", true],
  ["Lager", "bg-[#cbcbcb]", true],
  ["Treppenhäuser aus TG/Anlief.", "bg-[#b09425]", true],
  ["MFG-2 Büro und Co-Working", "bg-[#5f87a4]", false],
  ["MFG-2 Gastronomie", "bg-[#a0bf90]", false],
  ["MFG-2 Hotel und Boarding", "bg-[#c9729e]", false],
  ["MFG-2 Kern Büro und Co-W...", "bg-[#cbcbcb]", false],
];

function Report() {
  return (
    <section className="flex min-w-0 flex-[1402_1_0%] flex-col bg-white">
      <div className="flex flex-1 overflow-hidden pt-[106px] pl-[27px] font-['Noto_Sans',sans-serif]">
        <div className="w-[513px] shrink-0 pt-1">
          <label className="flex items-center">
            <span className="grid size-[34px] place-items-center">
              <input type="checkbox" defaultChecked className="col-start-1 row-start-1 size-[34px] appearance-none border-4 border-black bg-white" />
              <svg viewBox="0 0 20 16" className="pointer-events-none col-start-1 row-start-1 h-4 w-5" fill="none" stroke="#000" strokeWidth="3" aria-hidden="true">
                <path d="M1.500 8.500l5 5.500L18.500 1.500" />
              </svg>
            </span>
            <span className="ml-[23px] font-['Open_Sans',sans-serif] text-xl leading-7 font-bold text-[#3b4a52]">GIF Mietflächen</span>
          </label>
          <div className="flex justify-between pt-[46px]">
            <FloorBars />
            <Donut />
          </div>
        </div>
        <div className="shrink-0">
          <div className="flex items-start">
            <div className="w-[118px] text-[#3a3a3a]">
              <p className="font-['Inter',sans-serif] text-[20px] leading-[22px] font-semibold">kaulquappe<sup className="text-[9px]">®</sup></p>
              <p className="pr-1.5 text-right font-['Inter',sans-serif] text-[9px] leading-[10px] font-medium">build digital.</p>
            </div>
            <div className="ml-6 flex items-center gap-2 pt-[3px] text-[#17365a]">
              <svg viewBox="0 0 17 17" className="size-[17px]" fill="none" stroke="currentColor" strokeWidth="2.800" aria-hidden="true">
                <path d="M1.400 17V1.400h14.200V17M6.200 17V5.500M10.800 17V5.500" />
                <path d="M5 5.500h7" strokeWidth="2" />
              </svg>
              <span className="font-['Roboto',sans-serif] text-[22px] leading-[22px] font-bold">SIGNA</span>
            </div>
          </div>
          <div className="mt-[25px] ml-6"><Silhouette /></div>
          <div className="mt-[185px] ml-[7px] text-[14px] leading-6 text-[#666]">
            <h2 className="leading-5 font-semibold">MFG Nutzung</h2>
            <ul className="grid h-[230px] grid-rows-[repeat(8,minmax(0,1fr))]">
              {LEGEND.map(([label, color, wide]) => (
                <li key={label} className={"flex items-center " + (wide ? "gap-[7px]" : "gap-[3px]")}>
                  <span className={"size-3 rounded-full " + color} />
                  {label}
                </li>
              ))}
            </ul>
          </div>
        </div>
      </div>

      <div className="flex h-[22px] shrink-0 bg-[#f0f0f0] text-[#505050]">
        <button type="button" aria-label="Nach links" className="flex w-[21px] items-center justify-center">
          <svg viewBox="0 0 8 12" className="h-3 w-2" fill="none" stroke="currentColor" strokeWidth="2.500"><path d="M7 1L2 6l5 5" /></svg>
        </button>
        <div className="flex-1"><div className="h-full w-[96%] bg-[#cbcbcb]" /></div>
        <button type="button" aria-label="Nach rechts" className="flex w-[21px] items-center justify-center">
          <svg viewBox="0 0 8 12" className="h-3 w-2" fill="none" stroke="currentColor" strokeWidth="2.500"><path d="M1 1l5 5-5 5" /></svg>
        </button>
      </div>
      <div className="flex h-[37px] shrink-0 bg-[#f3f2f1]">
        <button type="button" aria-label="Vorherige Seite" className="flex w-5 items-center justify-center pt-1 text-[#c4c4c4]">
          <svg viewBox="0 0 5 8" className="h-2 w-[5px]" fill="currentColor"><path d="M5 0v8L0 4z" /></svg>
        </button>
        <button type="button" aria-label="Nächste Seite" className="flex w-[25px] items-center justify-end pt-1 pr-2 text-[#c4c4c4]">
          <svg viewBox="0 0 5 8" className="h-2 w-[5px]" fill="currentColor"><path d="M0 0v8l5-4z" /></svg>
        </button>
        <button type="button" className="border-r border-b-2 border-l border-r-[#d0d0d0] border-b-[#e8c13a] border-l-[#999] bg-white px-[22px] pt-2 font-['Open_Sans',sans-serif] text-[13px] leading-6 font-semibold text-[#222]">GIF Mietflächen</button>
      </div>
    </section>
  );
}

export default function App() {
  return (
    <div className="flex h-screen flex-col overflow-hidden bg-[#fbfcfd] font-['Noto_Sans_CJK_SC',sans-serif] text-[#2b2d38]">
      <Header />
      <div className="flex min-h-0 flex-1">
        <Sidebar />
        <SideTab label="Elemente und Issues" className="w-10 border-r border-[#e1e5e9] pl-2" />
        <main className="flex min-w-0 flex-1 flex-col">
          <PanelBar />
          <div className="flex min-h-0 flex-1">
            <ModelViewer />
            <div className="flex w-[11px] shrink-0 items-center justify-center bg-[#ececec]">
              <svg viewBox="0 0 6 34" className="h-[34px] w-1.5" fill="#cfcfcf" aria-hidden="true">
                {Array.from({ length: 8 }, (_, i) => <path key={i} d={`M0 ${i * 4.300}h2.500v2h-2.500zM3.500 ${i * 4.300}h2.500v2h-2.500z`} />)}
              </svg>
            </div>
            <Report />
          </div>
        </main>
        <SideTab label="Details" className="w-[33px] pl-2" />
      </div>
    </div>
  );
}
